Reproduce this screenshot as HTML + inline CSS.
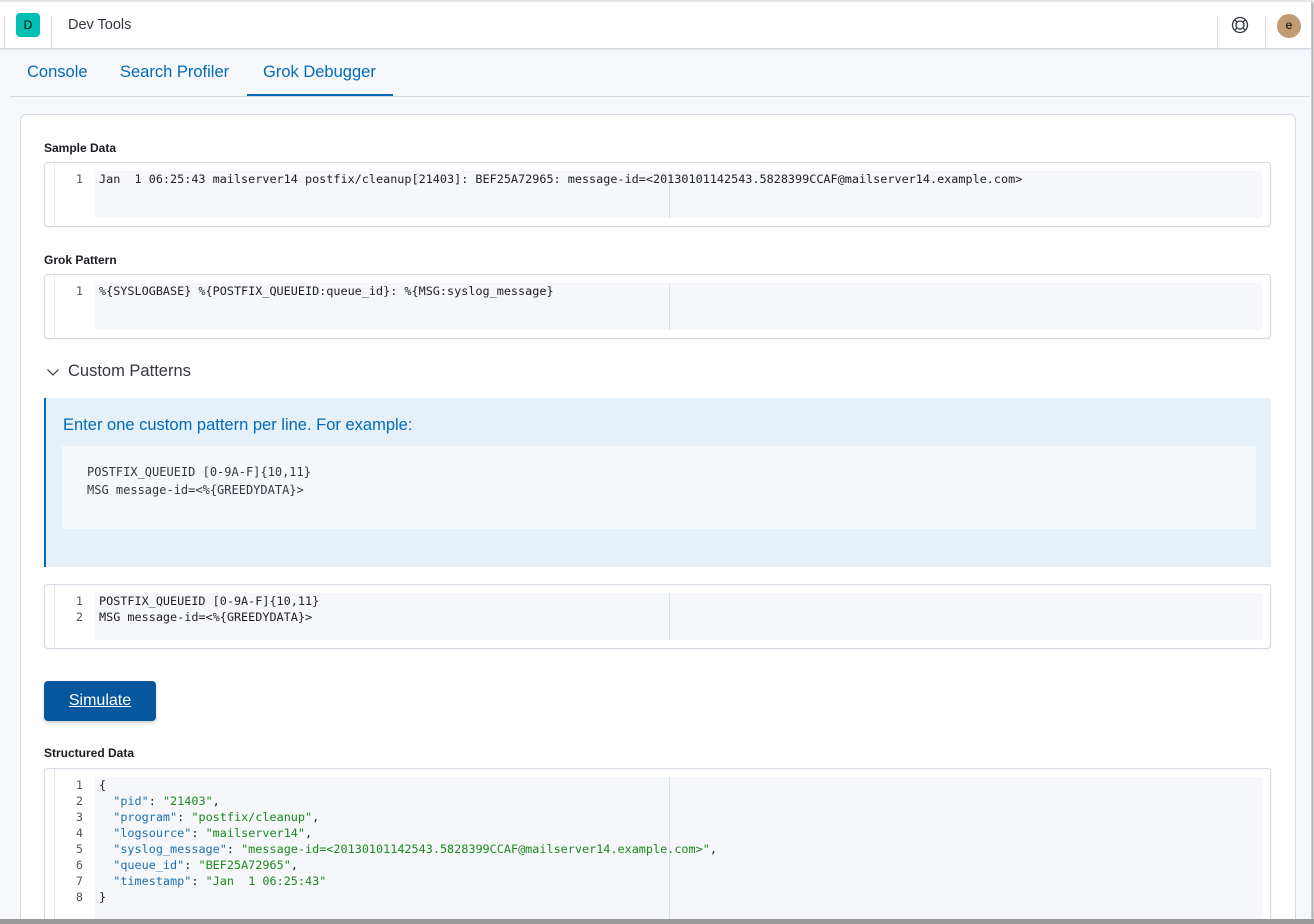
<!DOCTYPE html>
<html style="width:1314px;height:924px;overflow:hidden"><head><meta charset="utf-8"><style>
*{box-sizing:border-box;margin:0;padding:0}
body{width:1314px;height:924px;overflow:hidden;background:#fff;font-family:"Liberation Sans",sans-serif;position:relative}
.frame{position:absolute;left:0;top:0;width:1312px;height:919px;border-top:2px solid #e6e7ea;border-right:1px solid #c8ccd4;background:#f7f8fc;box-shadow:1px 2px 3px #888}
.hdr{position:absolute;left:0;top:2px;width:1311px;height:47px;background:#fff;border-bottom:1px solid #d3dae6;box-shadow:0 1px 2px rgba(0,0,0,.08)}
.logo{position:absolute;left:16px;top:11px;width:24px;height:24px;background:#00bfb3;border-radius:4px;font-size:12px;text-align:center;line-height:24px;color:#000}
.sep{position:absolute;top:14px;height:33px;width:1px;background:#d3dae6}
.title{position:absolute;left:68px;top:15px;font-size:14.5px;color:#343741}
.av{position:absolute;left:1277px;top:12px;width:24px;height:24px;border-radius:50%;background:#c19b73;font-size:12px;text-align:center;line-height:23px}
.tabs{position:absolute;left:10px;top:50px;width:1300px;height:47px;border-bottom:1px solid #d3dae6}
.tab{position:absolute;top:13px;font-size:16.5px;color:#006bb8}
.ul{position:absolute;left:247px;top:94px;width:146px;height:2px;background:#006bb8}
.panel{position:absolute;left:20px;top:114px;width:1276px;height:805px;background:#fff;border:1px solid #d3dae6;border-bottom:none;border-radius:6px 6px 0 0}
.lbl{position:absolute;left:44px;font-size:12px;font-weight:bold;color:#1a1c21}
.ed{position:absolute;left:44px;width:1227px;background:#fff;border:1px solid #d3dae6;border-radius:4px;box-shadow:0 1px 2px rgba(0,0,0,.06)}
.ed .g{position:absolute;left:9px;top:0;bottom:0;width:1px;background:#e6e7ea}
.ed .c{position:absolute;left:50px;right:8px;top:8px;bottom:8px;background:#f5f7fa}
.ed .m{position:absolute;left:624px;top:8px;bottom:8px;width:1px;background:#dcdfe4}
.ed pre{position:absolute;left:10px;top:8px;font-family:"DejaVu Sans Mono","Liberation Mono",monospace;font-size:11.8px;line-height:16px;color:#222}
.n{display:inline-block;width:28px;text-align:right;color:#555;margin-right:16px}
.k{color:#1f6fb0}.s{color:#1a8a1a}
.cp{position:absolute;left:44px;top:362px;font-size:16.5px;color:#343741}
.call{position:absolute;left:44px;top:398px;width:1227px;height:169px;background:#e6f0f8;border-left:2px solid #006bb8}
.call h{position:absolute;left:17px;top:18px;font-size:16.5px;color:#006bb8}
.call .ex{position:absolute;left:16px;top:48px;width:1194px;height:83px;background:#f5f7fa;font-family:"DejaVu Sans Mono",monospace;font-size:12px;line-height:18px;color:#343741;padding:17px 25px}
.btn{position:absolute;left:44px;top:681px;width:112px;height:40px;background:#07579e;border-radius:4px;color:#fff;font-size:16px;text-align:center;line-height:39px;text-decoration:underline;box-shadow:0 2px 3px rgba(0,0,0,.2)}
</style></head><body>
<div class="frame"></div>
<div class="hdr">
<div class="sep" style="left:4px"></div>
<div class="logo">D</div>
<div class="sep" style="left:51px"></div>
<div class="title">Dev Tools</div>
<div class="sep" style="left:1217px"></div>
<svg style="position:absolute;left:1231px;top:14px" width="18" height="18" viewBox="0 0 18 18" fill="none" stroke="#343741" stroke-width="1.3"><circle cx="9" cy="9" r="7.5"/><circle cx="9" cy="9" r="4"/><path d="M3.7 3.7l2.5 2.5M14.3 3.7l-2.5 2.5M3.7 14.3l2.5-2.5M14.3 14.3l-2.5-2.5"/></svg>
<div class="sep" style="left:1265px"></div>
<div class="av">e</div>
</div>
<div class="tabs">
<div class="tab" style="left:17px">Console</div>
<div class="tab" style="left:110px">Search Profiler</div>
<div class="tab" style="left:253px">Grok Debugger</div>
</div>
<div class="ul"></div>
<div class="panel"></div>
<div class="lbl" style="top:141px">Sample Data</div>
<div class="ed" style="top:162px;height:65px"><div class="g"></div><div class="c"></div><div class="m"></div><pre><span class="n">1</span>Jan  1 06:25:43 mailserver14 postfix/cleanup[21403]: BEF25A72965: message-id=&lt;20130101142543.5828399CCAF@mailserver14.example.com&gt;</pre></div>
<div class="lbl" style="top:253px">Grok Pattern</div>
<div class="ed" style="top:274px;height:65px"><div class="g"></div><div class="c"></div><div class="m"></div><pre><span class="n">1</span>%{SYSLOGBASE} %{POSTFIX_QUEUEID:queue_id}: %{MSG:syslog_message}</pre></div>
<svg style="position:absolute;left:46px;top:367px" width="14" height="10" viewBox="0 0 14 10" fill="none" stroke="#343741" stroke-width="1.2"><path d="M1.5 2.5l5.5 5.5 5.5-5.5"/></svg>
<div class="cp" style="left:68px">Custom Patterns</div>
<div class="call"><h>Enter one custom pattern per line. For example:</h><div class="ex">POSTFIX_QUEUEID [0-9A-F]{10,11}<br>MSG message-id=&lt;%{GREEDYDATA}&gt;</div></div>
<div class="ed" style="top:584px;height:65px"><div class="g"></div><div class="c"></div><div class="m"></div><pre><span class="n">1</span>POSTFIX_QUEUEID [0-9A-F]{10,11}
<span class="n">2</span>MSG message-id=&lt;%{GREEDYDATA}&gt;</pre></div>
<div class="btn">Simulate</div>
<div class="lbl" style="top:746px">Structured Data</div>
<div class="ed" style="top:768px;height:151px;border-bottom:none;border-radius:4px 4px 0 0"><div class="g"></div><div class="c" style="bottom:0"></div><div class="m" style="bottom:0"></div><pre><span class="n">1</span>{
<span class="n">2</span>  <span class="k">"pid"</span>: <span class="s">"21403"</span>,
<span class="n">3</span>  <span class="k">"program"</span>: <span class="s">"postfix/cleanup"</span>,
<span class="n">4</span>  <span class="k">"logsource"</span>: <span class="s">"mailserver14"</span>,
<span class="n">5</span>  <span class="k">"syslog_message"</span>: <span class="s">"message-id=&lt;20130101142543.5828399CCAF@mailserver14.example.com&gt;"</span>,
<span class="n">6</span>  <span class="k">"queue_id"</span>: <span class="s">"BEF25A72965"</span>,
<span class="n">7</span>  <span class="k">"timestamp"</span>: <span class="s">"Jan  1 06:25:43"</span>
<span class="n">8</span>}</pre></div>
<div style="position:absolute;left:0;top:919px;width:1314px;height:5px;background:#9a9a9a"></div>
</body></html>
